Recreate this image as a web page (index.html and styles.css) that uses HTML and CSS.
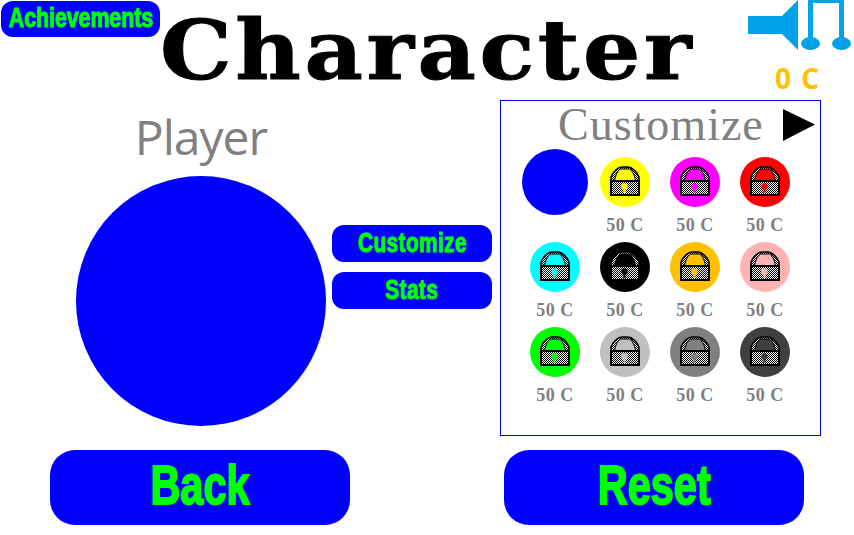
FILE: index.html

```html
<!DOCTYPE html>
<html lang="en">
<head>
  <meta charset="UTF-8" />
  <title>Character</title>
  <link rel="stylesheet" href="styles.css">
</head>
<body>

<svg class="defs" width="0" height="0">
  <defs>
    <pattern id="checker" width="2" height="2" patternUnits="userSpaceOnUse">
      <rect width="2" height="2" fill="#fff"/>
      <rect width="1" height="1" fill="#000"/>
      <rect x="1" y="1" width="1" height="1" fill="#000"/>
    </pattern>
    <symbol id="lock" viewBox="0 0 30 30">
      <path d="M1 15V11C3 6 8 1 12 1H18C22 1 27 6 29 11V15Z" fill="url(#checker)" stroke="#000" stroke-width="1.500"/>
      <path d="M4.500 15C5.500 8 9 3 11 3H19C21 3 24.500 8 25.500 15Z" fill="currentColor" stroke="#000" stroke-width="1"/>
      <rect x="1" y="15" width="28" height="14" fill="url(#checker)" stroke="#000" stroke-width="2"/>
      <circle cx="14.500" cy="20.500" r="3.200" fill="currentColor"/>
      <rect x="13.500" y="21" width="2" height="6" fill="currentColor"/>
    </symbol>
  </defs>
</svg>

<div id="game">
  <div class="top">
    <button class="btn btn-achievements"><span class="label">Achievements</span></button>
    <h1 class="title">Character</h1>
    <div class="sound">
      <div class="sound-icons">
        <svg width="50" height="50" viewBox="0 0 50 50">
          <path d="M0 16H34L50 0V50L34 34H0Z" fill="#00a2e8"/>
        </svg>
        <svg width="50" height="50" viewBox="0 0 50 50">
          <path d="M7 40V0H43V40H38V3H12V40Z" fill="#00a2e8"/>
          <ellipse cx="9.500" cy="43.500" rx="9.500" ry="6.500" fill="#00a2e8"/>
          <ellipse cx="40.500" cy="43.500" rx="9.500" ry="6.500" fill="#00a2e8"/>
        </svg>
      </div>
      <div class="coins">0 C</div>
    </div>
  </div>

  <div class="middle">
    <div class="player">
      <div class="player-name">Player</div>
      <div class="player-circle"></div>
    </div>
    <div class="tabs">
      <button class="btn btn-tab"><span class="label">Customize</span></button>
      <button class="btn btn-tab"><span class="label">Stats</span></button>
    </div>
    <div class="panel">
      <div class="panel-head">
        <span class="panel-title">Customize</span>
        <svg width="32" height="32" viewBox="0 0 32 32"><path d="M0 0L32 15.500L0 32Z" fill="#000"/></svg>
      </div>
      <div class="swatches">
        <div class="swatch"><div class="dot dot-big c-blue"></div></div>
        <div class="swatch"><div class="dot c-yellow"><svg width="30" height="30"><use href="#lock"/></svg></div><span class="price">50 C</span></div>
        <div class="swatch"><div class="dot c-magenta"><svg width="30" height="30"><use href="#lock"/></svg></div><span class="price">50 C</span></div>
        <div class="swatch"><div class="dot c-red"><svg width="30" height="30"><use href="#lock"/></svg></div><span class="price">50 C</span></div>
        <div class="swatch"><div class="dot c-cyan"><svg width="30" height="30"><use href="#lock"/></svg></div><span class="price">50 C</span></div>
        <div class="swatch"><div class="dot c-black"><svg width="30" height="30"><use href="#lock"/></svg></div><span class="price">50 C</span></div>
        <div class="swatch"><div class="dot c-orange"><svg width="30" height="30"><use href="#lock"/></svg></div><span class="price">50 C</span></div>
        <div class="swatch"><div class="dot c-pink"><svg width="30" height="30"><use href="#lock"/></svg></div><span class="price">50 C</span></div>
        <div class="swatch"><div class="dot c-green"><svg width="30" height="30"><use href="#lock"/></svg></div><span class="price">50 C</span></div>
        <div class="swatch"><div class="dot c-silver"><svg width="30" height="30"><use href="#lock"/></svg></div><span class="price">50 C</span></div>
        <div class="swatch"><div class="dot c-gray"><svg width="30" height="30"><use href="#lock"/></svg></div><span class="price">50 C</span></div>
        <div class="swatch"><div class="dot c-dark"><svg width="30" height="30"><use href="#lock"/></svg></div><span class="price">50 C</span></div>
      </div>
    </div>
  </div>

  <div class="bottom">
    <button class="btn btn-big"><span class="label">Back</span></button>
    <button class="btn btn-big"><span class="label">Reset</span></button>
  </div>
</div>

</body>
</html>
```

FILE: styles.css

```css
html, body { margin: 0; padding: 0; background: #fff; overflow: hidden; }
.defs { display: block; }
#game { width: 854px; height: 535px; display: flex; flex-direction: column; }

.btn { display: flex; align-items: center; justify-content: center; border: none; padding: 0; background: #0000ff; color: #00ff00; font-family: "Liberation Sans", sans-serif; font-weight: bold; -webkit-text-stroke: 1px #00ff00; }
.label { display: block; flex: none; position: relative; top: -1px; white-space: nowrap; }

.top { display: flex; height: 100px; padding-left: 1px; box-sizing: border-box; }
.btn-achievements { width: 159px; height: 36px; margin-top: 1px; border-radius: 12px; font-size: 28px; }
.btn-achievements .label { transform: scaleX(0.76); }
.title { margin: 0; width: 588px; font: bold 82px/100px "DejaVu Serif", serif; letter-spacing: 3.200px; color: #000; white-space: nowrap; transform: scaleX(1.1); transform-origin: left center; -webkit-text-stroke: 1px #000; }
.sound { width: 106px; }
.sound-icons { display: flex; gap: 3px; }
.coins { margin: 13px 0 0 27px; color: #ffc000; font: bold 28px/30px "Open Sans", sans-serif; letter-spacing: 1.500px; white-space: pre; }

.middle { display: flex; height: 350px; }
.player { width: 332px; padding-left: 76px; box-sizing: border-box; }
.player-name { width: 250px; margin-top: 3px; height: 73px; text-align: center; color: #808080; font: 48px/68px "Open Sans", sans-serif; letter-spacing: -1px; }
.player-circle { width: 250px; height: 250px; border-radius: 50%; background: #0000ff; }

.tabs { width: 160px; margin: 125px 8px 0 0; display: flex; flex-direction: column; gap: 10px; }
.btn-tab { width: 160px; height: 37px; border-radius: 12px; font-size: 28px; letter-spacing: 0.6px; }
.btn-tab .label { transform: scaleX(0.74); }

.panel { width: 321px; height: 336px; box-sizing: border-box; border: 1px solid #0000ff; }
.panel-head { display: flex; align-items: center; height: 48px; padding: 0 5px 0 57px; justify-content: space-between; }
.panel-title { color: #808080; font: 46px/48px "Liberation Serif", serif; letter-spacing: 1px; }

.swatches { display: grid; grid-template-columns: repeat(4, 70px); grid-auto-rows: 85px; padding-left: 19px; }
.swatch { display: flex; flex-direction: column; align-items: center; padding-top: 8px; box-sizing: border-box; }
.dot { width: 50px; height: 50px; box-sizing: border-box; padding-top: 9px; border-radius: 50%; display: flex; align-items: flex-start; justify-content: center; flex: none; }
.dot svg { display: block; }
.dot-big { width: 66px; height: 66px; position: relative; top: -8px; }
.price { margin-top: 8px; color: #808080; font: bold 18px/20px "Liberation Serif", serif; letter-spacing: 0.5px; }

.c-blue { background: #0000ff; color: #0000ff; }
.c-yellow { background: #ffff00; color: #ffff00; }
.c-magenta { background: #ff00ff; color: #ff00ff; }
.c-red { background: #ff0000; color: #ff0000; }
.c-cyan { background: #00ffff; color: #00ffff; }
.c-black { background: #000; color: #000; }
.c-orange { background: #ffc000; color: #ffc000; }
.c-pink { background: #ffb3b3; color: #ffb3b3; }
.c-green { background: #00ff00; color: #00ff00; }
.c-silver { background: #c0c0c0; color: #c0c0c0; }
.c-gray { background: #808080; color: #808080; }
.c-dark { background: #404040; color: #404040; }

.bottom { display: flex; padding: 0 0 0 50px; gap: 154px; }
.btn-big { width: 300px; height: 75px; border-radius: 25px; font-size: 56px; -webkit-text-stroke: 2px #00ff00; }
.btn-big .label { transform: scaleX(0.74); top: -3px; }
```
